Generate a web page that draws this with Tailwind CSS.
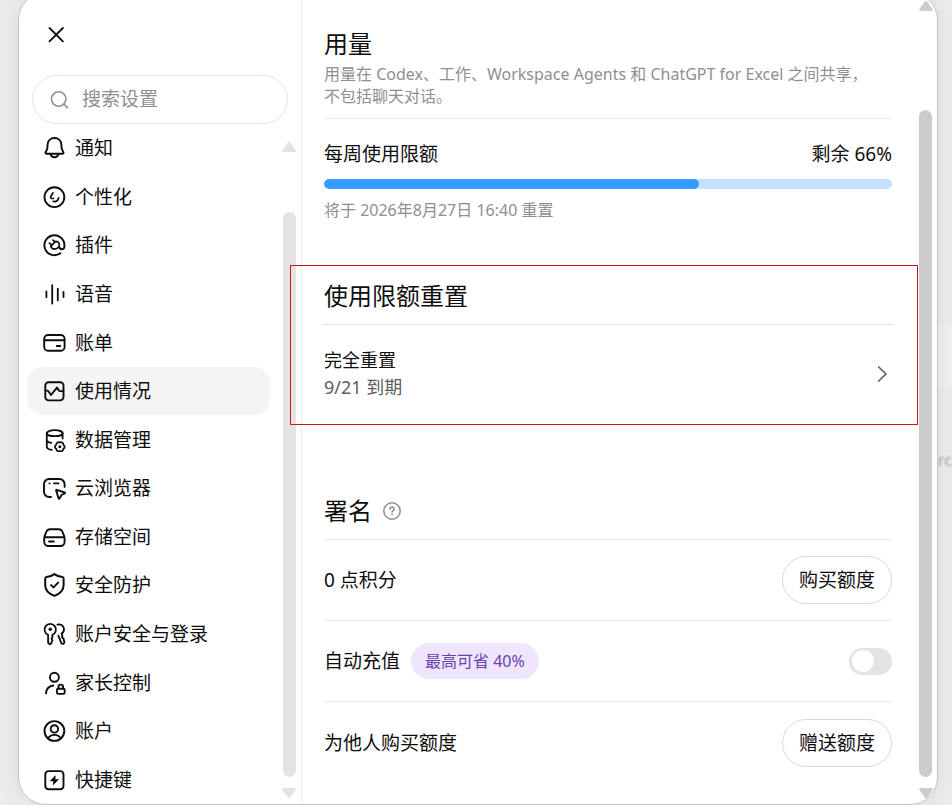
<!DOCTYPE html>
<html lang="zh-CN">
<head>
  <meta charset="UTF-8" />
  <meta name="viewport" content="width=device-width, initial-scale=1.0" />
  <title>设置 - 使用情况</title>
  <script src="https://cdn.jsdelivr.net/npm/@tailwindcss/browser@4"></script>
</head>
<body class="h-screen overflow-hidden bg-[#ececec] text-[#0d0d0d] font-['Noto_Sans','Noto_Sans_CJK_SC',sans-serif]">

  <!-- Page behind the dialog -->
  <div class="absolute inset-y-0 right-0 w-6" aria-hidden="true">
    <div class="mt-[322px] h-[68px] border-y border-[#e6e6e6] bg-[#efefef]"></div>
    <p class="mt-[56px] text-[17px] leading-7 text-[#a8a8a8] blur-[1px]">arc</p>
  </div>

  <!-- Settings dialog -->
  <div role="dialog" aria-label="设置" class="relative ml-[18px] mr-[14px] -mt-2 flex h-[calc(100vh+8px)] overflow-hidden rounded-[28px] border border-[#c4c4c4] bg-white pt-[7px] shadow-[0_0_24px_rgba(0,0,0,0.08)]">

    <!-- Sidebar -->
    <aside class="flex w-[283px] shrink-0 flex-col border-r border-[#ededed]">
      <button type="button" aria-label="关闭" class="ml-[25px] mt-[23px] flex size-6 items-center justify-center">
        <svg class="size-6" viewBox="0 0 24 24" fill="none" stroke="currentColor" stroke-width="1.8" stroke-linecap="round"><path d="M5.5 5 18.9 18.4M18.9 5 5.5 18.4" /></svg>
      </button>

      <label class="mx-[13px] mt-7 flex h-[49px] shrink-0 items-center gap-2.5 rounded-full border border-[#e3e3e3] pl-[15px] text-[#8f8f8f]">
        <svg class="size-6 shrink-0" viewBox="0 0 24 24" fill="none" stroke="currentColor" stroke-width="1.6" stroke-linecap="round"><circle cx="10.7" cy="11" r="7.2" /><path d="m16.1 16.3 3.3 3.3" /></svg>
        <input type="text" placeholder="搜索设置" aria-label="搜索设置" class="w-full min-w-0 bg-transparent text-[19px] outline-none placeholder:text-[#8f8f8f]" />
      </label>

      <div class="flex min-h-0 flex-1">
        <nav class="ml-2 flex flex-1 flex-col text-[19px] leading-7">
          <a href="#notifications" class="flex flex-1 items-center gap-[9px] rounded-2xl pl-[15px]">
            <svg class="size-6" viewBox="0 0 24 24" fill="none" stroke="currentColor" stroke-width="1.9" stroke-linecap="round" stroke-linejoin="round"><path d="M12.5 2c-4 0-6.7 2.9-6.9 6.7l-.2 2.9c-.1.9-.3 1.7-.7 2.5l-1.1 2.1c-.4.8.1 1.6.9 1.6h16c.8 0 1.3-.8.9-1.6l-1.1-2.1c-.4-.8-.6-1.6-.7-2.5l-.2-2.9C19.200 4.900 16.500 2 12.500 2Z" /><path d="M8.700 18.200a3.900 3.900 0 0 0 7.600 0" /></svg>
            通知
          </a>
          <a href="#personalization" class="flex flex-1 items-center gap-[9px] rounded-2xl pl-[15px]">
            <svg class="size-6" viewBox="0 0 24 24" fill="none" stroke="currentColor" stroke-width="1.9" stroke-linecap="round" stroke-linejoin="round"><circle cx="12.4" cy="12.2" r="9.900" /><path d="M10.900 7.800 8.800 11.700c-.4.8-.1 1.500.7 1.600l2 .2" stroke-width="1.700" /><path d="M11.200 16.400c2.800.5 4.900-1 5.400-3.600" stroke-width="1.700" /></svg>
            个性化
          </a>
          <a href="#plugins" class="flex flex-1 items-center gap-[9px] rounded-2xl pl-[15px]">
            <svg class="size-6" viewBox="0 0 24 24" fill="none" stroke="currentColor" stroke-width="1.9" stroke-linecap="round" stroke-linejoin="round"><path d="M18.300 20.300A10 10 0 1 1 22.400 12.200v1.300c0 3.400-4.300 3.700-5.100.6" /><path d="m8.700 13.300 5-4.900c3.200-.1 4.500 3.300 3.100 5.400-1.800 2.800-6.500 3.600-8.100-.5ZM9.900 12 7.400 10.100M12.900 9.200 11 7.200" stroke-width="1.700" /></svg>
            插件
          </a>
          <a href="#voice" class="flex flex-1 items-center gap-[9px] rounded-2xl pl-[15px]">
            <svg class="size-6" viewBox="0 0 24 24" fill="none" stroke="currentColor" stroke-width="1.8" stroke-linecap="round"><path d="M4.400 9.500v5.800M10.200 3.200v18.300M15.800 6.700v11.700M21.500 9.800v5.200" /></svg>
            语音
          </a>
          <a href="#billing" class="flex flex-1 items-center gap-[9px] rounded-2xl pl-[15px]">
            <svg class="size-6" viewBox="0 0 24 24" fill="none" stroke="currentColor" stroke-width="1.9" stroke-linecap="round"><rect x="2.200" y="4" width="20.400" height="15.800" rx="3.800" /><path d="M2.500 9.300h19.800M14.800 15h3.500" /></svg>
            账单
          </a>
          <a href="#usage" aria-current="page" class="flex flex-1 items-center gap-[9px] rounded-2xl bg-[#f4f4f4] pl-[15px]">
            <svg class="size-6" viewBox="0 0 24 24" fill="none" stroke="currentColor" stroke-width="1.9" stroke-linecap="round" stroke-linejoin="round"><rect x="3.300" y="3.200" width="18.200" height="18.200" rx="3.300" /><path d="M3.500 11.600h1.700c.6 0 .9.2 1.200.7L9 16l6-7.400 1.900 2.800c.3.5.7.7 1.200.7h3.200" /></svg>
            使用情况
          </a>
          <a href="#data" class="flex flex-1 items-center gap-[9px] rounded-2xl pl-[15px]">
            <svg class="size-6" viewBox="0 0 24 24" fill="none" stroke="currentColor" stroke-width="1.8" stroke-linecap="round" stroke-linejoin="round"><ellipse cx="12.700" cy="5.200" rx="7.900" ry="3" /><path d="M4.800 5.200v13.500c0 1.700 1.900 2.700 5 3.200M20.600 5.200v5.300M4.800 12.500c.3 1.300 1.900 2 4.500 2.300" /><path d="M21.300 16.700a2.300 2.300 0 0 1 0 4.200 2.300 2.300 0 0 1-3.500 2.100 2.300 2.300 0 0 1-3.500-2.100 2.300 2.300 0 0 1 0-4.200 2.300 2.300 0 0 1 3.500-2.100 2.300 2.300 0 0 1 3.500 2.100Z" /><circle cx="17.800" cy="18.800" r="1.500" fill="currentColor" stroke="none" /></svg>
            数据管理
          </a>
          <a href="#browser" class="flex flex-1 items-center gap-[9px] rounded-2xl pl-[15px]">
            <svg class="size-6" viewBox="0 0 24 24" fill="none" stroke="currentColor" stroke-width="1.9" stroke-linecap="round" stroke-linejoin="round"><path d="M9 21H7.200a5.200 5.200 0 0 1-5.200-5.200V8.200A5.200 5.200 0 0 1 7.200 3h10.200a5.200 5.200 0 0 1 5.200 5.200v2.700M7.500 7.400h.1M12 7.400h4.500" /><path d="M14.100 14.400c-.1-.5.3-.8.800-.6l7.700 2.700c.5.200.5.800.1 1l-3.200 1.500-1.900 3.500c-.3.500-.9.400-1-.1Z" /></svg>
            云浏览器
          </a>
          <a href="#storage" class="flex flex-1 items-center gap-[9px] rounded-2xl pl-[15px]">
            <svg class="size-6" viewBox="0 0 24 24" fill="none" stroke="currentColor" stroke-width="1.9" stroke-linecap="round" stroke-linejoin="round"><path d="M8 4.200h8.800c1.600 0 2.900.8 3.500 2.300l1.700 4.200c.4 1 .6 2 .6 3v3.100a4.200 4.200 0 0 1-4.200 4.200h-12a4.200 4.200 0 0 1-4.200-4.200v-3.100c0-1 .2-2 .6-3l1.700-4.200C5.100 5 6.400 4.200 8 4.200ZM2.600 12.300h19.700M7 16.500h4.800" /></svg>
            存储空间
          </a>
          <a href="#safety" class="flex flex-1 items-center gap-[9px] rounded-2xl pl-[15px]">
            <svg class="size-6" viewBox="0 0 24 24" fill="none" stroke="currentColor" stroke-width="2" stroke-linecap="round" stroke-linejoin="round"><path d="M12.400 1.100c-2.400 1.700-5.200 2.500-7.900 2.900-.8.1-1.300.7-1.300 1.500v6.700c0 5 3.700 8.500 9.200 10.700 5.500-2.200 9.200-5.700 9.200-10.700V5.500c0-.8-.5-1.400-1.300-1.500-2.700-.4-5.500-1.200-7.900-2.900Z" /><path d="m9.100 12.100 2.400 2.300 4.600-4.800" /></svg>
            安全防护
          </a>
          <a href="#security" class="flex flex-1 items-center gap-[9px] rounded-2xl pl-[15px]">
            <svg class="size-6" viewBox="0 0 24 24" fill="none" stroke="currentColor" stroke-width="1.8" stroke-linecap="round" stroke-linejoin="round"><path d="M6.100 12.900a5.700 5.700 0 1 1 4.300 0v2.300l-.9 1.500 1 1.700-.9 1.500v1.200L8 22.300l-1.900-1.500Z" /><circle cx="8.200" cy="7.300" r="1.700" fill="currentColor" stroke="none" /><path d="M15.400 2.700c2.900-1.200 6 .8 6.500 3.700.4 2.300-.5 4-2.300 5.200l.8 2.200-.4 1.700 1.700 1.300.1 1.700.8 1.200-1 2.100-2.200-.3-3-7.900" /></svg>
            账户安全与登录
          </a>
          <a href="#parental" class="flex flex-1 items-center gap-[9px] rounded-2xl pl-[15px]">
            <svg class="size-6" viewBox="0 0 24 24" fill="none" stroke="currentColor" stroke-width="1.9" stroke-linecap="round" stroke-linejoin="round"><circle cx="12.400" cy="6.300" r="4.500" /><path d="M4 22.400c.3-4.300 3.200-7.300 7.300-7.900" /><rect x="14.900" y="17.700" width="7.800" height="5.200" rx="1.300" /><path d="M16.500 17.500v-1.700c0-2.900 4.600-2.900 4.600 0v1.700" /></svg>
            家长控制
          </a>
          <a href="#account" class="flex flex-1 items-center gap-[9px] rounded-2xl pl-[15px]">
            <svg class="size-6" viewBox="0 0 24 24" fill="none" stroke="currentColor" stroke-width="1.9" stroke-linecap="round"><circle cx="12.400" cy="12" r="9.900" /><circle cx="12.400" cy="9.900" r="3.700" /><path d="M6.100 19.300c1.400-2.400 3.700-3.400 6.300-3.400s4.900 1 6.300 3.400" /></svg>
            账户
          </a>
          <a href="#shortcuts" class="flex flex-1 items-center gap-[9px] rounded-2xl pl-[15px]">
            <svg class="size-6" viewBox="0 0 24 24" fill="none" stroke="currentColor" stroke-width="1.9" stroke-linejoin="round"><rect x="3.300" y="3.100" width="18.200" height="18.200" rx="3.300" /><path d="m13.300 7.700-5 5.200h3.400l-.5 4 5.200-5.400H13Z" fill="currentColor" stroke-width=".6" /></svg>
            快捷键
          </a>
        </nav>

        <!-- Sidebar scrollbar -->
        <div class="ml-3 mr-[5px] flex w-[14px] flex-col items-center text-[#e3e3e3]" aria-hidden="true">
          <svg class="mt-[17px] h-3 w-[14px] shrink-0" viewBox="0 0 14 12" fill="currentColor"><path d="M5.800 1.600c.7-.9 1.700-.9 2.400 0l5.300 7.400c.7 1 .3 2-.8 2H1.300c-1.100 0-1.500-1-.8-2Z" /></svg>
          <div class="mt-[59px] w-[13px] flex-1 rounded-full bg-[#e3e3e3]"></div>
          <svg class="mb-[5px] mt-2.5 h-3 w-[14px] shrink-0 rotate-180" viewBox="0 0 14 12" fill="currentColor"><path d="M5.800 1.600c.7-.9 1.700-.9 2.400 0l5.300 7.400c.7 1 .3 2-.8 2H1.300c-1.100 0-1.500-1-.8-2Z" /></svg>
        </div>
      </div>
    </aside>

    <!-- Usage panel -->
    <main class="min-w-0 flex-1 pl-[22px] pr-[27px] pt-7">
      <section>
        <header class="border-b border-[#ededed] pb-[11px]">
          <h1 class="text-2xl leading-8">用量</h1>
          <p class="mt-[3px] text-base leading-[22px] text-[#8f8f8f]">用量在 Codex、工作、Workspace Agents 和 ChatGPT for Excel 之间共享，<br />不包括聊天对话。</p>
        </header>
        <div class="mt-5 flex justify-between text-[19px] leading-[30px]">
          <span id="weeklyLabel">每周使用限额</span>
          <span>剩余 66%</span>
        </div>
        <div role="progressbar" aria-labelledby="weeklyLabel" aria-valuenow="66" class="mt-2.5 h-2.5 overflow-hidden rounded-full bg-[#c2e0ff]">
          <div class="h-full rounded-full bg-[#339cff]" style="width: 66%"></div>
        </div>
        <p class="mt-2.5 text-base leading-[22px] text-[#8f8f8f]">将于 2026年8月27日 16:40 重置</p>
      </section>

      <section class="relative mt-[59px]">
        <!-- Highlight frame -->
        <div class="pointer-events-none absolute -bottom-6 -left-[34px] -right-[26px] -top-[15px] z-10 border border-[#c9151e]"></div>
        <h2 class="border-b border-[#e0e0e0] pb-3 text-2xl leading-8">使用限额重置</h2>
        <button type="button" class="mt-[22px] flex w-full items-center justify-between text-left text-lg leading-[27px]">
          <span>
            <span class="block">完全重置</span>
            <span class="block text-[#5d5d5d]">9/21 到期</span>
          </span>
          <svg class="h-6 w-5" viewBox="0 0 20 24" fill="none" stroke="#5d5d5d" stroke-width="1.7" stroke-linecap="round" stroke-linejoin="round"><path d="m6.700 5 7.300 7-7.300 7" /></svg>
        </button>
      </section>

      <section class="mt-[94px]">
        <h2 class="flex items-center gap-2.5 border-b border-[#ededed] pb-3 text-2xl leading-8">
          署名
          <svg class="size-5" viewBox="0 0 20 20" fill="none" stroke="#8f8f8f" stroke-width="1.6" stroke-linecap="round" stroke-linejoin="round"><circle cx="10" cy="10" r="8.200" /><path d="M7.900 8.100c.2-2.900 4.300-2.600 4.200-.1 0 1.600-2.100 1.600-2.100 3.200" /><circle cx="10" cy="13.600" r=".5" fill="#8f8f8f" stroke-width=".8" /></svg>
        </h2>
        <div class="text-[19px] leading-7">
          <div class="flex h-[81px] items-center justify-between border-b border-[#ededed]">
            <span>0 点积分</span>
            <button type="button" class="h-12 rounded-full border border-[#d9d9d9] px-4">购买额度</button>
          </div>
          <div class="flex h-[81px] items-center justify-between border-b border-[#ededed]">
            <div class="flex items-center gap-[11px]">
              <label for="autoTopUp">自动充值</label>
              <span class="rounded-full bg-[#efe5fe] px-[14px] text-base leading-9 text-[#6b3fae]">最高可省 40%</span>
            </div>
            <input type="checkbox" role="switch" id="autoTopUp" class="flex h-[27px] w-[43px] appearance-none items-center rounded-full bg-[#e3e3e3] pl-[3px] before:size-[22px] before:rounded-full before:bg-white checked:bg-[#339cff] checked:before:ml-4" />
          </div>
          <div class="flex h-[81px] items-center justify-between">
            <span>为他人购买额度</span>
            <button type="button" class="h-12 rounded-full border border-[#d9d9d9] px-4">赠送额度</button>
          </div>
        </div>
      </section>
    </main>

    <!-- Panel scrollbar -->
    <div class="mr-[5px] flex w-[13px] shrink-0 flex-col items-center text-[#cccccc]" aria-hidden="true">
      <svg class="h-3 w-[14px] shrink-0" viewBox="0 0 14 12" fill="currentColor"><path d="M5.800 1.600c.7-.9 1.700-.9 2.400 0l5.300 7.400c.7 1 .3 2-.8 2H1.300c-1.100 0-1.500-1-.8-2Z" /></svg>
      <div class="mt-[98px] w-full flex-1 rounded-full bg-[#cccccc]"></div>
      <svg class="mb-[5px] mt-2.5 h-3 w-[14px] shrink-0 rotate-180" viewBox="0 0 14 12" fill="currentColor"><path d="M5.800 1.600c.7-.9 1.700-.9 2.400 0l5.300 7.400c.7 1 .3 2-.8 2H1.300c-1.100 0-1.500-1-.8-2Z" /></svg>
    </div>
  </div>
</body>
</html>
